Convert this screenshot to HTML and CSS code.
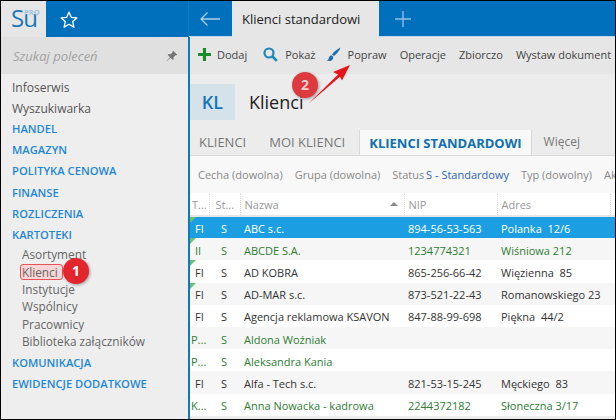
FILE: index.html
```html
<!DOCTYPE html>
<html lang="pl">
<head>
<meta charset="utf-8">
<title>Klienci standardowi</title>
<link rel="stylesheet" href="styles.css">
</head>
<body>
<div class="app">
  <aside class="side">
    <div class="side-top">
      <div class="logo"><span class="logo-su">Su</span><span class="logo-pro">PRO</span></div>
      <div class="fav">
        <svg width="20" height="20" viewBox="0 0 20 20"><path d="M10 2.200l2.300 5.100 5.500.6-4.100 3.700 1.200 5.500L10 14.300l-4.900 2.800 1.200-5.500-4.100-3.700 5.500-.6z" fill="none" stroke="#fff" stroke-width="1.300" stroke-linejoin="round"/></svg>
      </div>
    </div>
    <div class="search">
      <span class="search-text">Szukaj poleceń</span>
      <svg class="pin" width="12" height="12" viewBox="0 0 12 12"><path d="M7.200.8l4 4-1 .7-.7-.3-2 2 .2 2.100-.8.8-2.400-2.400L1 11l-.3-.3 3.300-3.500L1.700 4.800l.8-.8 2.100.2 2-2-.2-.7z" fill="#757575"/></svg>
    </div>
    <nav class="menu">
      <a class="item">Infoserwis</a>
      <a class="item last">Wyszukiwarka</a>
      <a class="group">HANDEL</a>
      <a class="group">MAGAZYN</a>
      <a class="group">POLITYKA CENOWA</a>
      <a class="group">FINANSE</a>
      <a class="group">ROZLICZENIA</a>
      <a class="group">KARTOTEKI</a>
      <div class="sub">
        <a>Asortyment</a>
        <a><span class="hl">Klienci</span></a>
        <a>Instytucje</a>
        <a>Wspólnicy</a>
        <a>Pracownicy</a>
        <a>Biblioteka załączników</a>
      </div>
      <a class="group">KOMUNIKACJA</a>
      <a class="group">EWIDENCJE DODATKOWE</a>
    </nav>
  </aside>
  <main class="main">
    <header class="topbar">
      <div class="back">
        <svg width="20" height="14" viewBox="0 0 20 14"><path d="M20 7H1M7.500 .5L1 7l6.500 6.500" fill="none" stroke="#a9cfe9" stroke-width="1.300"/></svg>
      </div>
      <div class="doc-tab">Klienci standardowi</div>
      <div class="new-tab">
        <svg width="16" height="16" viewBox="0 0 16 16"><path d="M8 0v16M0 8h16" stroke="#8fc0e4" stroke-width="1.400"/></svg>
      </div>
    </header>
    <div class="toolbar">
      <span class="tool">
        <svg width="13" height="13" viewBox="0 0 14 14"><path d="M5.300 0h3.400v5.300H14v3.400H8.700V14H5.300V8.700H0V5.300h5.300z" fill="#1e8a2e"/></svg>Dodaj
      </span>
      <span class="tool show">
        <svg width="15" height="15" viewBox="0 0 15 15"><circle cx="6" cy="6" r="4.500" fill="none" stroke="#1d87b8" stroke-width="2.200"/><path d="M9.500 9.500l4.300 4.300" stroke="#1d87b8" stroke-width="2.600"/></svg>Pokaż
      </span>
      <span class="tool fix">
        <svg width="15" height="15" viewBox="0 0 15 15"><path d="M14.500.5C11 2 7.500 5 6 7.500L8 9c2.500-2 5.500-5 6.500-8.500z" fill="#1d6fb0"/><path d="M5.500 8.200C3.500 8.500 3 10 2.700 11.500 2.500 12.500 1.500 13 .8 13.300c1.500 1.200 4.500 1 5.700-.8.800-1.100.8-2 .8-2.800z" fill="#1d6fb0"/></svg>Popraw
      </span>
      <span class="tool">Operacje</span>
      <span class="tool">Zbiorczo</span>
      <span class="tool">Wystaw dokument</span>
    </div>
    <div class="title">
      <div class="kl">KL</div>
      <h1>Klienci</h1>
    </div>
    <div class="tabs">
      <span class="tab">KLIENCI</span>
      <span class="tab">MOI KLIENCI</span>
      <span class="tab active">KLIENCI STANDARDOWI</span>
      <span class="tab more">Więcej</span>
    </div>
    <div class="filters">
      <span>Cecha (dowolna)</span>
      <span>Grupa (dowolna)</span>
      <span>Status <b>S - Standardowy</b></span>
      <span>Typ (dowolny)</span>
      <span>Ak</span>
    </div>
    <table class="grid">
      <colgroup>
        <col class="c-t"><col class="c-st"><col class="c-name"><col class="c-nip"><col class="c-addr"><col>
      </colgroup>
      <thead>
        <tr><th>T...</th><th>St...</th><th>Nazwa<span class="sort"></span></th><th>NIP</th><th>Adres</th><th></th></tr>
      </thead>
      <tbody>
        <tr class="sel"><td class="flag">FI</td><td>S</td><td>ABC s.c.</td><td>894-56-53-563</td><td>Polanka&nbsp; 12/6</td><td></td></tr>
        <tr class="green"><td class="flag">II</td><td>S</td><td>ABCDE S.A.</td><td>1234774321</td><td>Wiśniowa 212</td><td></td></tr>
        <tr><td class="flag">FI</td><td>S</td><td>AD KOBRA</td><td>865-256-66-42</td><td>Więzienna&nbsp; 85</td><td></td></tr>
        <tr><td class="flag">FI</td><td>S</td><td>AD-MAR s.c.</td><td>873-521-22-43</td><td>Romanowskiego 23</td><td></td></tr>
        <tr><td>FI</td><td>S</td><td>Agencja reklamowa KSAVON</td><td>847-88-99-698</td><td>Piękna&nbsp; 44/2</td><td></td></tr>
        <tr class="green"><td class="cut">P...</td><td>S</td><td>Aldona Woźniak</td><td></td><td></td><td></td></tr>
        <tr class="green"><td class="cut">P...</td><td>S</td><td>Aleksandra Kania</td><td></td><td></td><td></td></tr>
        <tr><td>FI</td><td>S</td><td>Alfa - Tech s.c.</td><td>821-53-15-245</td><td>Męckiego&nbsp; 83</td><td></td></tr>
        <tr class="green"><td class="cut">K...</td><td>S</td><td>Anna Nowacka - kadrowa</td><td>2244372182</td><td>Słoneczna 3/17</td><td></td></tr>
      </tbody>
    </table>
  </main>
</div>
<span class="badge badge-1">1</span>
<span class="badge badge-2">2</span>
<svg class="arrow" width="55" height="50" viewBox="0 0 55 50"><path d="M8 44L38 14.500 33 12 50 5 42 20.500 40 16.800z" fill="#e8141c"/></svg>
</body>
</html>
```

FILE: styles.css
```css
* { box-sizing: border-box; }
html, body { margin: 0; height: 100%; }
body {
  position: relative;
  width: 616px;
  height: 420px;
  overflow: hidden;
  background: #000;
  font-family: "Open Sans", "Noto Sans", sans-serif;
  font-size: 11px;
  color: #333;
}
.app {
  display: flex;
  height: 418px;
  margin: 1px 1px 0 1px;
  background: #efefef;
  overflow: hidden;
}

/* sidebar */
.side { width: 187px; flex: none; background: #eeeeee; display: flex; flex-direction: column; }
.side-top { display: flex; height: 36px; }
.logo { width: 45px; background: #e6e6e6; position: relative; }
.logo-su { position: absolute; left: 10px; top: 2px; font-size: 24px; line-height: 30px; color: #1a78b8; letter-spacing: -1px; }
.logo-pro { position: absolute; left: 23px; top: 7px; font-size: 7.500px; line-height: 8px; font-weight: 700; color: #9cc3de; }
.fav { flex: 1; background: #0070bc; padding: 9px 0 0 13px; }
.search { height: 37px; background: #e0e0e0; display: flex; align-items: center; justify-content: space-between; padding: 0 10px 0 12px; }
.search-text { font-style: italic; font-size: 13px; color: #a3a3a3; }
.menu { display: flex; flex-direction: column; padding-top: 4px; }
.menu a { display: block; }
.item { font-size: 12px; line-height: 20.500px; color: #555; padding-left: 11px; }
.item.last { margin-bottom: -1px; }
.group { font-size: 11.200px; font-weight: 600; line-height: 21.200px; color: #1f87d8; padding-left: 11px; }
.sub { font-size: 11.800px; line-height: 17.400px; color: #666; padding: 1px 0 1px 21px; }
.hl { display: inline-block; line-height: 14px; padding: 0 4px 0 1px; margin-left: -2px; background: #f7d6d6; border: 1px solid #e8535a; border-radius: 3px; }

/* main */
.main { flex: 1; min-width: 0; border-left: 2px solid #0f78c0; background: #ececec; display: flex; flex-direction: column; }
.topbar { display: flex; height: 36px; background: #0070bc; border-bottom: 1px solid #bcd9ee; flex: none; margin-left: -1px; }
.back { width: 43px; padding: 11px 0 0 11px; }
.doc-tab { width: 147px; background: #e6e6e6; font-size: 13px; font-weight: 500; color: #222; line-height: 36px; padding-left: 10px; margin-bottom: -1px; }
.new-tab { padding: 10px 0 0 16px; }
.toolbar { display: flex; align-items: center; height: 37px; padding-bottom: 2px; background: #e6e6e6; flex: none; padding-left: 8px; white-space: nowrap; overflow: hidden; color: #444; gap: 13px; }
.tool { display: inline-flex; align-items: center; gap: 6px; font-size: 11px; }
.tool.show { gap: 7px; margin-left: 3px; }
.tool.fix { gap: 7px; margin-left: -3px; }
.title { display: flex; align-items: center; height: 56px; flex: none; background: #ececec; }
.kl { width: 45px; height: 36px; background: #d6e2ea; color: #1476bb; font-size: 18px; font-weight: 600; line-height: 36px; text-align: center; }
h1 { margin: 0 0 0 14px; font-size: 18px; font-weight: 400; color: #222; }
.tabs { display: flex; height: 26px; flex: none; align-items: flex-end; border-bottom: 1px solid #d9d9d9; background: #ececec; overflow: hidden; white-space: nowrap; }
.tab { font-size: 13px; color: #777; line-height: 26px; padding: 0 9px; margin-right: 5px; }
.tab.active { background: #f8f8f8; border: 1px solid #d9d9d9; border-bottom: 0; color: #0f6fb0; font-weight: 700; margin: 0; height: 26px; }
.tab.more { font-size: 12px; padding-left: 12px; }
.filters { display: flex; height: 37px; flex: none; gap: 12px; align-items: center; padding-left: 8px; background: #f8f8f8; color: #888; font-size: 11px; white-space: nowrap; overflow: hidden; }
.filters b { font-weight: 400; color: #2d62b8; margin-left: -1px; }

/* table */
.grid { table-layout: fixed; width: 100%; border-collapse: collapse; background: #fff; flex: none; }
.c-t { width: 19px; }
.c-st { width: 31px; }
.c-name { width: 164px; }
.c-nip { width: 93px; }
.c-addr { width: 113px; }
.grid th { height: 23px; padding: 0 0 0 4px; font-weight: 400; text-align: left; color: #999; font-size: 11px; border-left: 1px dotted #ddd; border-bottom: 2px solid #e6e6e6; position: relative; white-space: nowrap; overflow: hidden; }
.grid th:first-child { border-left: 0; padding-left: 2px; }
.grid th:nth-child(2) { padding-left: 6px; }
.grid td { height: 22.200px; padding: 2px 0 0 4px; white-space: nowrap; overflow: hidden; font-size: 11px; color: #333; position: relative; }
.grid td:first-child { padding-left: 5px; }
.grid td:nth-child(2) { padding-left: 12px; }
.grid td.cut { padding-left: 1px; }
.grid tbody tr:nth-child(even) td { background: #f6f6f6; }
.grid tbody tr.green td { color: #2e7d32; }
.grid tbody tr.sel td { background: #1b9fe2; color: #fff; }
.flag::before { content: ""; position: absolute; left: 0; top: 0; border-style: solid; border-width: 6px 6px 0 0; border-color: #6cc070 transparent transparent transparent; }
.sort { position: absolute; right: 6px; top: 9px; width: 0; height: 0; border-left: 4px solid transparent; border-right: 4px solid transparent; border-bottom: 4px solid #888; }

/* annotations */
.badge { position: absolute; width: 26px; height: 26px; border-radius: 50%; background: #e3262e; box-shadow: 1px 1px 3px rgba(0,0,0,.35); color: #fff; font-weight: 700; font-size: 14px; line-height: 26px; text-align: center; }
.badge-1 { left: 63px; top: 258px; }
.badge-2 { left: 292px; top: 72px; background: #dd3a3f; color: #f6d0d0; }
.arrow { position: absolute; left: 300px; top: 60px; }
```
